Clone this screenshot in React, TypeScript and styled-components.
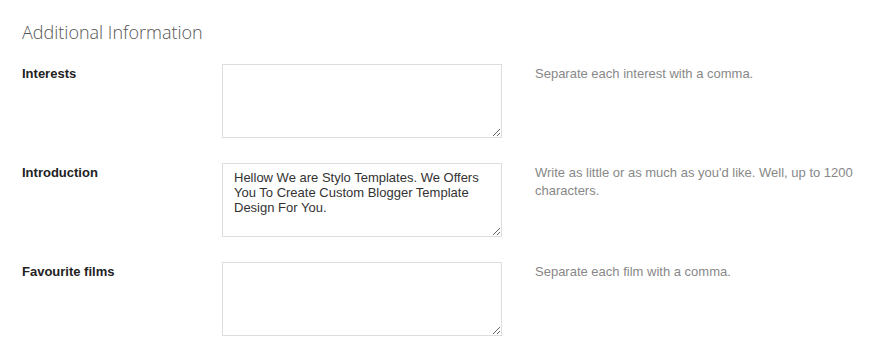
import React from 'react';
import styled, { createGlobalStyle } from 'styled-components';

const GlobalStyle = createGlobalStyle`
    body {
        margin: 0;
        background: #fff;
        font-family: 'Liberation Sans', Arial, sans-serif;
    }
`;

const Section = styled.div`
    padding: 16px 0 0 22px;
`;

const Title = styled.h3`
    margin: 2px 0 18px 0;
    font-family: 'Open Sans', sans-serif;
    font-weight: 300;
    font-size: 18px;
    line-height: 28px;
    color: #555;
`;

const Row = styled.div`
    display: grid;
    grid-template-columns: 200px 280px 1fr;
    margin-bottom: 25px;
`;

const Label = styled.label`
    padding-top: 2px;
    font-size: 13px;
    font-weight: bold;
    line-height: 16px;
    color: #222;
`;

const Field = styled.textarea`
    box-sizing: border-box;
    width: 280px;
    height: 74px;
    margin: 0;
    padding: 6px 11px;
    border: 1px solid #ddd;
    border-radius: 0;
    font-family: 'Liberation Sans', Arial, sans-serif;
    font-size: 13px;
    line-height: 15px;
    color: #333;
    outline: none;
`;

const Help = styled.p`
    max-width: 330px;
    margin: 0;
    padding: 1px 0 0 33px;
    font-size: 13px;
    line-height: 18px;
    color: #888;
`;

const fields = [
    {
        label: 'Interests',
        value: '',
        help: 'Separate each interest with a comma.',
    },
    {
        label: 'Introduction',
        value: 'Hellow We are Stylo Templates. We Offers You To Create Custom Blogger Template Design For You.',
        help: "Write as little or as much as you'd like. Well, up to 1200 characters.",
    },
    {
        label: 'Favourite films',
        value: '',
        help: 'Separate each film with a comma.',
    },
];

export default function App() {
    return (
        <>
            <GlobalStyle />
            <Section>
                <Title>Additional Information</Title>
                {fields.map((f) => (
                    <Row key={f.label}>
                        <Label>{f.label}</Label>
                        <Field defaultValue={f.value} />
                        <Help>{f.help}</Help>
                    </Row>
                ))}
            </Section>
        </>
    );
}
